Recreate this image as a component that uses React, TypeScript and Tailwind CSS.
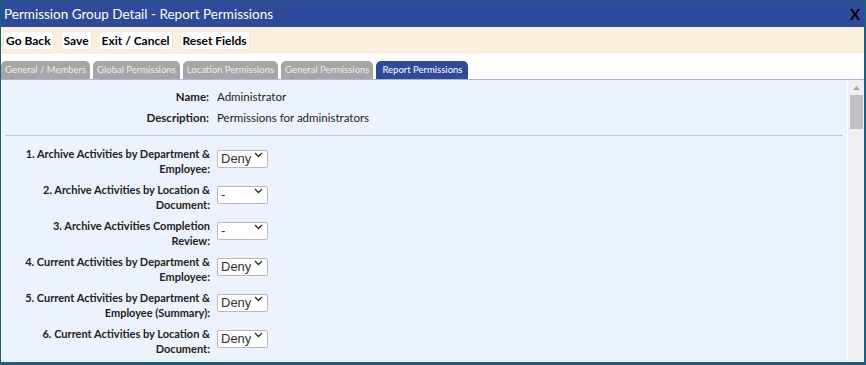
import React from "react";

const tabs = [
  "General / Members",
  "Global Permissions",
  "Location Permissions",
  "General Permissions",
  "Report Permissions",
];

const reports: { lines: string[]; value: string }[] = [
  { lines: ["1. Archive Activities by Department &", "Employee:"], value: "Deny" },
  { lines: ["2. Archive Activities by Location &", "Document:"], value: "-" },
  { lines: ["3. Archive Activities Completion", "Review:"], value: "-" },
  { lines: ["4. Current Activities by Department &", "Employee:"], value: "Deny" },
  { lines: ["5. Current Activities by Department &", "Employee (Summary):"], value: "Deny" },
  { lines: ["6. Current Activities by Location &", "Document:"], value: "Deny" },
];

const PermissionSelect = ({ value }: { value: string }) => (
  <div className="relative w-[51px] h-[18px] shrink-0 -mt-[1px]">
    <select
      defaultValue={value}
      className="appearance-none w-full h-full bg-white border border-[#b9b9b9] rounded-[2px] pl-[3px] text-[13px] leading-[16px] text-[#333] font-['Liberation_Sans',Arial,sans-serif] outline-none"
    >
      <option value="-">-</option>
      <option value="Deny">Deny</option>
      <option value="Allow">Allow</option>
    </select>
    <svg
      className="absolute right-[5px] top-[7px] pointer-events-none"
      width="9"
      height="6"
      viewBox="0 0 9 6"
    >
      <path d="M1 1l3.5 3.5L8 1" fill="none" stroke="#333" strokeWidth="1.4" />
    </svg>
  </div>
);

export default function App() {
  return (
    <div className="w-[866px] h-[365px] flex flex-col overflow-hidden border-l border-t border-r-2 border-b-[3px] border-[#1d5e80] font-['Lato',sans-serif]">
      {/* Title bar */}
      <div className="h-[26px] shrink-0 bg-[#2e4b9b] text-white flex items-center justify-between pl-[3px] pr-[4px]">
        <span className="text-[13.5px]">Permission Group Detail - Report Permissions</span>
        <span className="text-[15px] font-bold text-black">X</span>
      </div>

      {/* Toolbar */}
      <div className="h-[27px] shrink-0 bg-[#fbeedc] flex items-center gap-[7px] pl-[2px]">
        {["Go Back", "Save", "Exit / Cancel", "Reset Fields"].map((b) => (
          <button
            key={b}
            className="h-[19px] px-[2px] bg-white border border-[#f1e9de] rounded-[3px] text-[12px] font-bold text-black leading-none"
          >
            {b}
          </button>
        ))}
      </div>

      {/* Tabs */}
      <div className="h-[26px] shrink-0 bg-white flex items-end gap-[3px] border-b border-[#a9b6d6]">
        {tabs.map((t) => {
          const active = t === "Report Permissions";
          return (
            <div
              key={t}
              className={`h-[18px] flex items-center rounded-t-[5px] text-[9.5px] ${
                active
                  ? "bg-[#2e4b9b] text-white px-[6px]"
                  : "bg-[#a6a6a6] text-[#ececec] px-[4px]"
              }`}
            >
              {t}
            </div>
          );
        })}
      </div>

      {/* Content */}
      <div className="flex-1 flex min-h-0">
        <div className="flex-1 bg-[#edf3fe] overflow-hidden pt-[8px]">
          <div className="grid grid-cols-[208px_1fr] gap-x-[8px] gap-y-[3px] text-[11.5px] leading-[18px] text-[#222]">
            <div className="text-right font-bold">Name:</div>
            <div>Administrator</div>
            <div className="text-right font-bold">Description:</div>
            <div>Permissions for administrators</div>
          </div>
          <div className="mx-[4px] mt-[8px] mb-[10px] border-t border-[#c4c8d0]" />
          <div className="flex flex-col gap-[6px]">
            {reports.map((r) => (
              <div key={r.lines[0]} className="flex gap-[7px]">
                <div className="w-[209px] text-right font-bold text-[11px] leading-[15px] text-[#222]">
                  {r.lines[0]}
                  <br />
                  {r.lines[1]}
                </div>
                <PermissionSelect value={r.value} />
              </div>
            ))}
          </div>
        </div>

        {/* Scrollbar */}
        <div className="w-[17px] bg-[#f0f0f0] flex flex-col items-center border-l border-white">
          <svg width="9" height="8" viewBox="0 0 9 8" className="mt-[4px]">
            <path d="M1 6h7L4.5 2z" fill="#a3a3a3" />
          </svg>
          <div className="mt-[3px] w-[13px] h-[34px] bg-[#c1c1c1]" />
        </div>
      </div>
    </div>
  );
}
